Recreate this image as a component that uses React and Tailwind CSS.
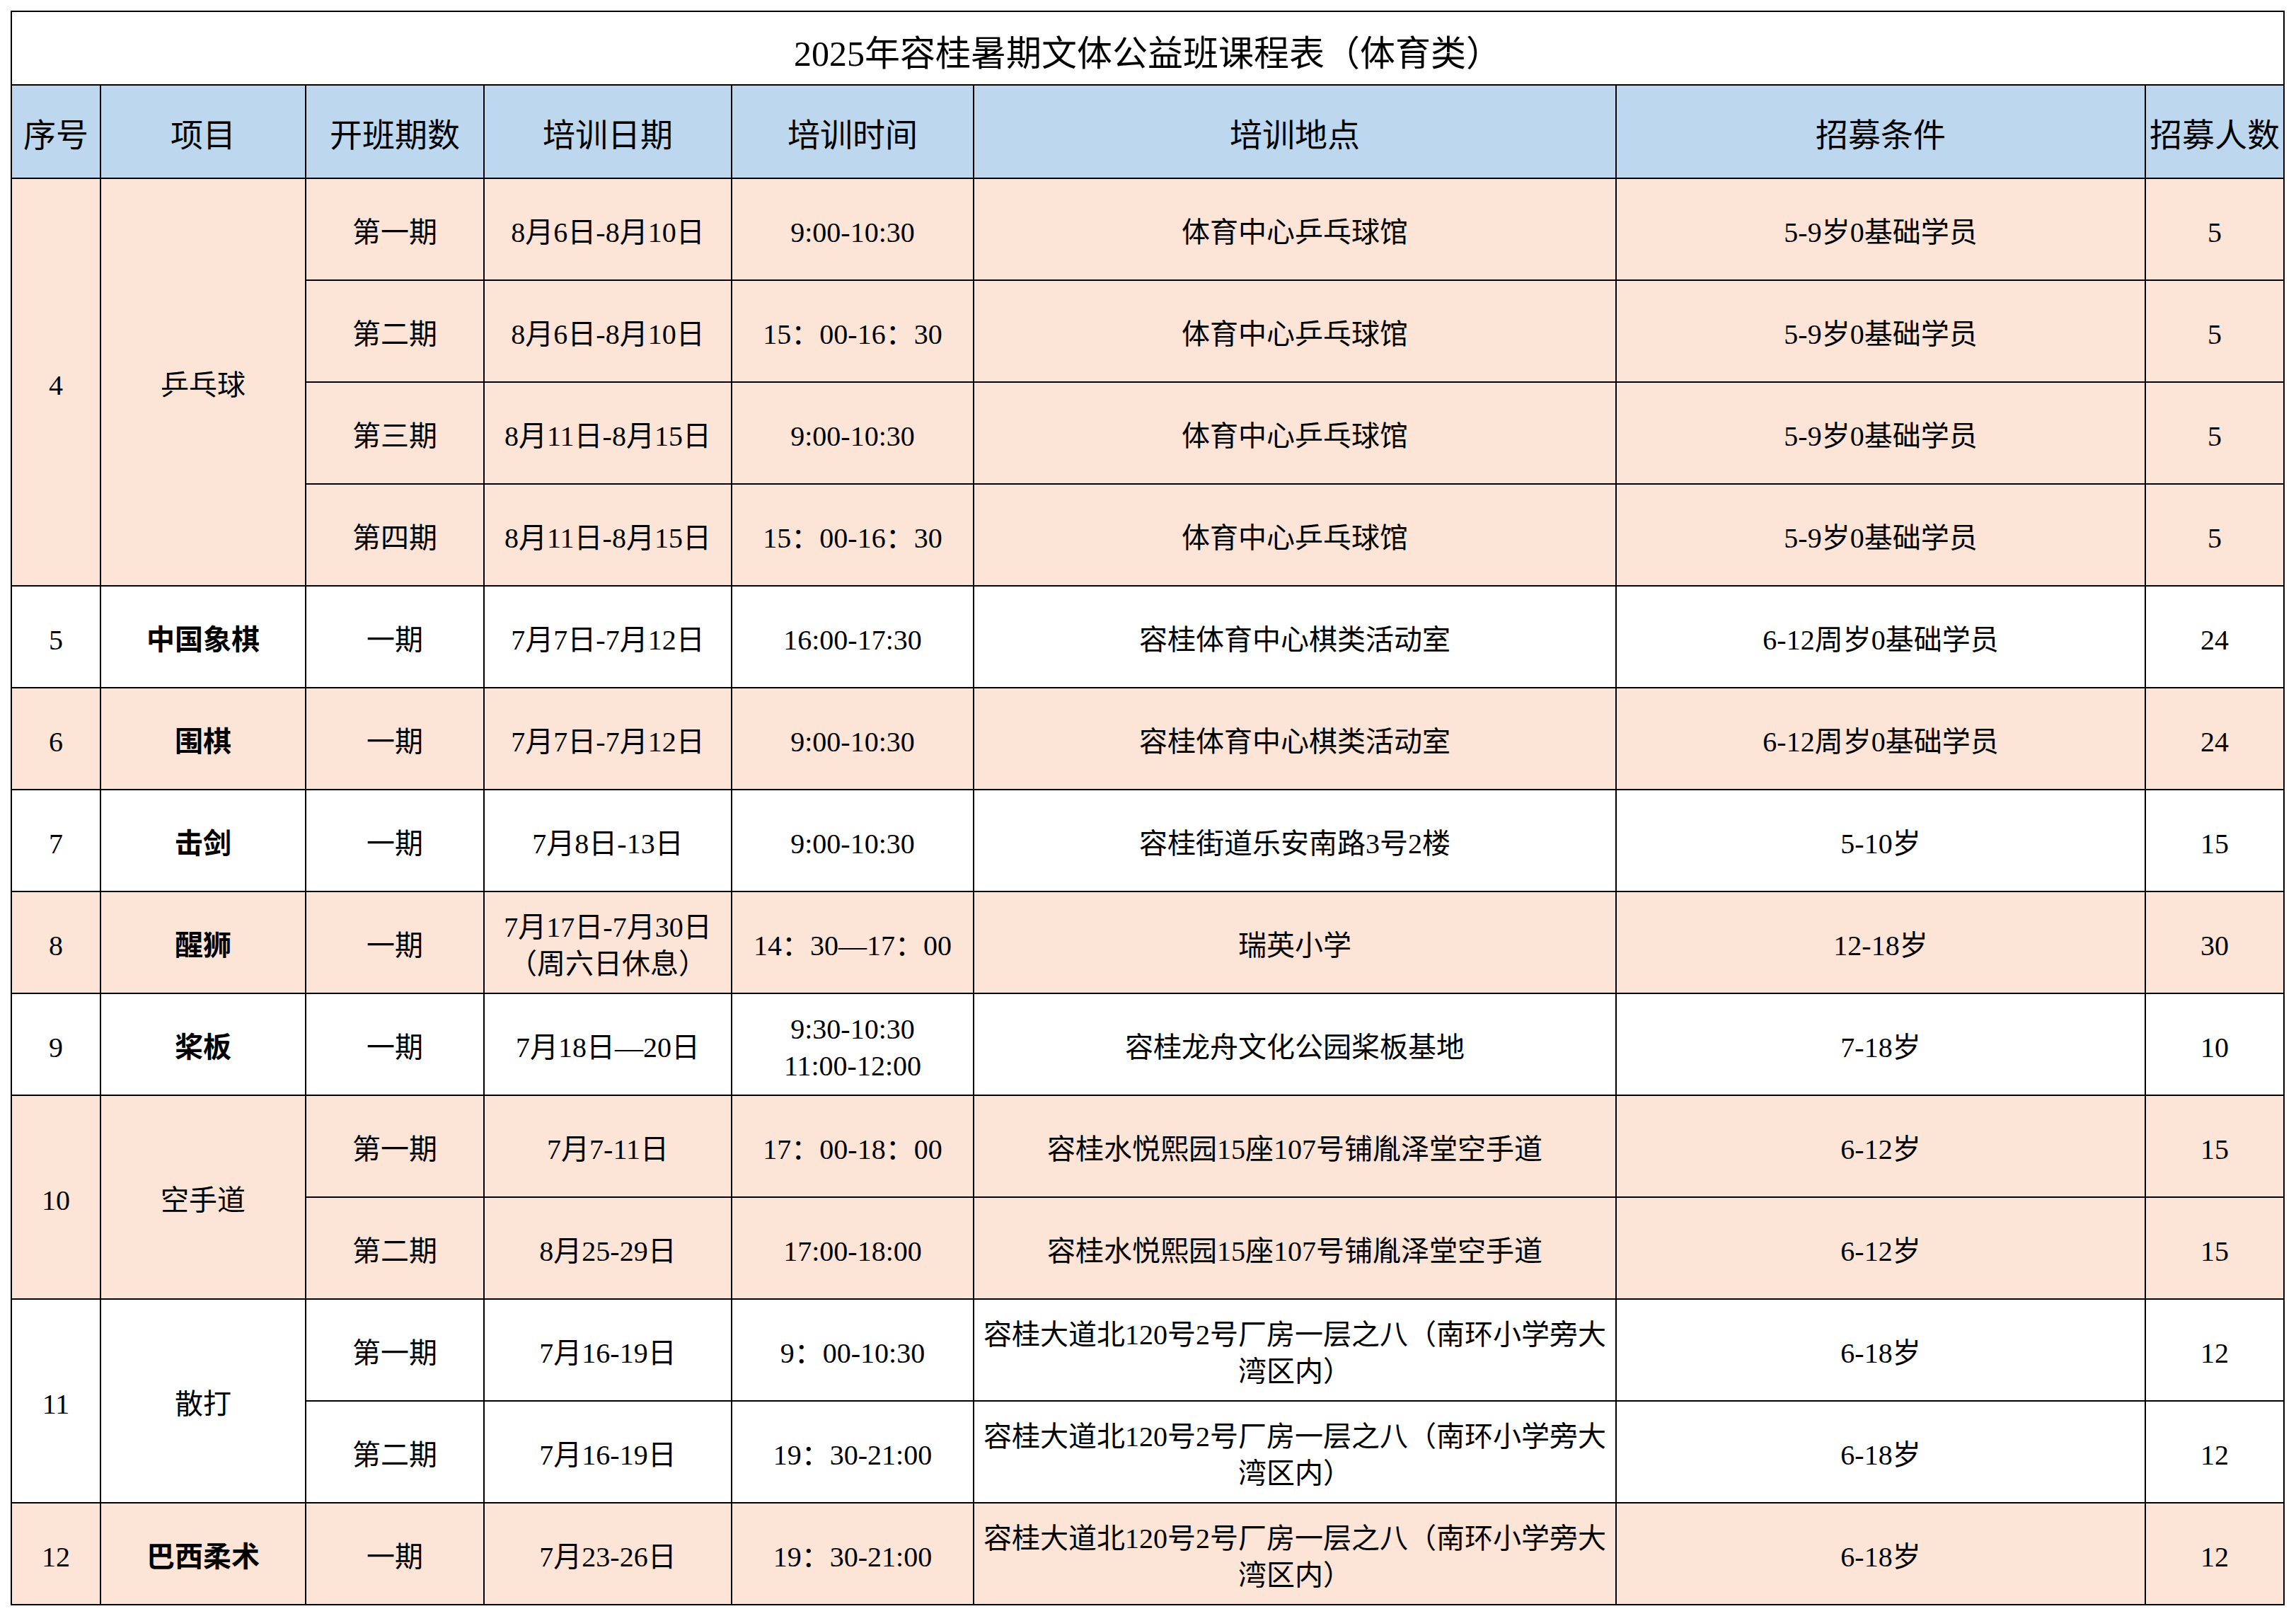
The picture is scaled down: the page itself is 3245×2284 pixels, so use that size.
import React from "react";

const PINK = "bg-[#fce4d6]";
const WHITE = "bg-white";
const ADDR = "容桂大道北120号2号厂房一层之八（南环小学旁大\n湾区内）";

const groups = [
  {
    seq: "4",
    name: "乒乓球",
    bold: false,
    bg: PINK,
    rows: [
      ["第一期", "8月6日-8月10日", "9:00-10:30", "体育中心乒乓球馆", "5-9岁0基础学员", "5"],
      ["第二期", "8月6日-8月10日", "15：00-16：30", "体育中心乒乓球馆", "5-9岁0基础学员", "5"],
      ["第三期", "8月11日-8月15日", "9:00-10:30", "体育中心乒乓球馆", "5-9岁0基础学员", "5"],
      ["第四期", "8月11日-8月15日", "15：00-16：30", "体育中心乒乓球馆", "5-9岁0基础学员", "5"],
    ],
  },
  {
    seq: "5",
    name: "中国象棋",
    bold: true,
    bg: WHITE,
    rows: [["一期", "7月7日-7月12日", "16:00-17:30", "容桂体育中心棋类活动室", "6-12周岁0基础学员", "24"]],
  },
  {
    seq: "6",
    name: "围棋",
    bold: true,
    bg: PINK,
    rows: [["一期", "7月7日-7月12日", "9:00-10:30", "容桂体育中心棋类活动室", "6-12周岁0基础学员", "24"]],
  },
  {
    seq: "7",
    name: "击剑",
    bold: true,
    bg: WHITE,
    rows: [["一期", "7月8日-13日", "9:00-10:30", "容桂街道乐安南路3号2楼", "5-10岁", "15"]],
  },
  {
    seq: "8",
    name: "醒狮",
    bold: true,
    bg: PINK,
    rows: [["一期", "7月17日-7月30日\n（周六日休息）", "14：30—17：00", "瑞英小学", "12-18岁", "30"]],
  },
  {
    seq: "9",
    name: "桨板",
    bold: true,
    bg: WHITE,
    rows: [["一期", "7月18日—20日", "9:30-10:30\n11:00-12:00", "容桂龙舟文化公园桨板基地", "7-18岁", "10"]],
  },
  {
    seq: "10",
    name: "空手道",
    bold: false,
    bg: PINK,
    rows: [
      ["第一期", "7月7-11日", "17：00-18：00", "容桂水悦熙园15座107号铺胤泽堂空手道", "6-12岁", "15"],
      ["第二期", "8月25-29日", "17:00-18:00", "容桂水悦熙园15座107号铺胤泽堂空手道", "6-12岁", "15"],
    ],
  },
  {
    seq: "11",
    name: "散打",
    bold: false,
    bg: WHITE,
    rows: [
      ["第一期", "7月16-19日", "9：00-10:30", ADDR, "6-18岁", "12"],
      ["第二期", "7月16-19日", "19：30-21:00", ADDR, "6-18岁", "12"],
    ],
  },
  {
    seq: "12",
    name: "巴西柔术",
    bold: true,
    bg: PINK,
    rows: [["一期", "7月23-26日", "19：30-21:00", ADDR, "6-18岁", "12"]],
  },
];

const headers = ["序号", "项目", "开班期数", "培训日期", "培训时间", "培训地点", "招募条件", "招募人数"];
const widths = [126, 290, 252, 350, 342, 908, 748, 196];

const cell = "border-2 border-black text-center align-middle px-0 pb-0 whitespace-pre";

export default function App() {
  return (
    <div className="bg-white min-h-screen pt-[15px] pl-[15px] text-black font-['Liberation_Serif','Noto_Sans_CJK_SC',serif]">
      <table className="border-collapse table-fixed w-[3214px]">
        <colgroup>
          {widths.map((w, i) => (
            <col key={i} style={{ width: w }} />
          ))}
        </colgroup>
        <tbody>
          <tr>
            <td colSpan={8} className={`${cell} h-[104px] text-[50px] leading-none pt-[16px] bg-white`}>
              2025年容桂暑期文体公益班课程表（体育类）
            </td>
          </tr>
          <tr>
            {headers.map((h) => (
              <td key={h} className={`${cell} h-[132px] text-[46px] leading-none pt-[12px] bg-[#bdd7ee]`}>
                {h}
              </td>
            ))}
          </tr>
          {groups.map((g) =>
            g.rows.map((r, ri) => (
              <tr key={g.seq + "-" + ri} className={g.bg}>
                {ri === 0 && (
                  <>
                    <td rowSpan={g.rows.length} className={`${cell} text-[40px] leading-[52px] pt-[10px]`}>
                      {g.seq}
                    </td>
                    <td
                      rowSpan={g.rows.length}
                      className={`${cell} text-[40px] leading-[52px] pt-[10px] ${g.bold ? "font-semibold" : "font-normal"}`}
                    >
                      {g.name}
                    </td>
                  </>
                )}
                {r.map((v, ci) => (
                  <td key={ci} className={`${cell} h-[144px] text-[40px] leading-[52px] pt-[10px]`}>
                    {v}
                  </td>
                ))}
              </tr>
            ))
          )}
        </tbody>
      </table>
    </div>
  );
}
